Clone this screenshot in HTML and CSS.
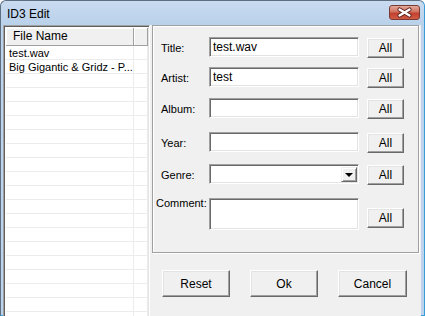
FILE: index.html
```html
<!DOCTYPE html>
<html>
<head>
  <title>ID3 Edit</title>
  <link rel="stylesheet" href="styles.css">
</head>
<body>
  <div class="window">
    <div class="titlebar">
      <span class="title">ID3 Edit</span>
      <div class="close-btn">
        <svg width="31" height="15" viewBox="0 0 31 15">
          <path d="M10.5 4.5 L20.5 10.5 M20.5 4.5 L10.5 10.5" stroke="#5a1d18" stroke-width="4.2" stroke-linecap="round"/>
          <path d="M10.5 4.5 L20.5 10.5 M20.5 4.5 L10.5 10.5" stroke="#fff" stroke-width="2.4" stroke-linecap="round"/>
        </svg>
      </div>
    </div>

    <div class="client">
      <div class="file-list">
        <div class="list-header">
          <div class="col-name">File Name</div>
          <div class="col-rest"></div>
        </div>
        <div class="list-body">
          <div class="list-row"><div class="cell-name">test.wav</div><div class="cell-rest"></div></div>
          <div class="list-row"><div class="cell-name">Big Gigantic &amp; Gridz - P...</div><div class="cell-rest"></div></div>
          <div class="list-row"><div class="cell-name"></div><div class="cell-rest"></div></div>
          <div class="list-row"><div class="cell-name"></div><div class="cell-rest"></div></div>
          <div class="list-row"><div class="cell-name"></div><div class="cell-rest"></div></div>
          <div class="list-row"><div class="cell-name"></div><div class="cell-rest"></div></div>
          <div class="list-row"><div class="cell-name"></div><div class="cell-rest"></div></div>
          <div class="list-row"><div class="cell-name"></div><div class="cell-rest"></div></div>
          <div class="list-row"><div class="cell-name"></div><div class="cell-rest"></div></div>
          <div class="list-row"><div class="cell-name"></div><div class="cell-rest"></div></div>
          <div class="list-row"><div class="cell-name"></div><div class="cell-rest"></div></div>
          <div class="list-row"><div class="cell-name"></div><div class="cell-rest"></div></div>
          <div class="list-row"><div class="cell-name"></div><div class="cell-rest"></div></div>
          <div class="list-row"><div class="cell-name"></div><div class="cell-rest"></div></div>
          <div class="list-row"><div class="cell-name"></div><div class="cell-rest"></div></div>
          <div class="list-row"><div class="cell-name"></div><div class="cell-rest"></div></div>
          <div class="list-row"><div class="cell-name"></div><div class="cell-rest"></div></div>
          <div class="list-row"><div class="cell-name"></div><div class="cell-rest"></div></div>
          <div class="list-row"><div class="cell-name"></div><div class="cell-rest"></div></div>
          <div class="list-row"><div class="cell-name"></div><div class="cell-rest"></div></div>
        </div>
      </div>

      <div class="editor">
        <div class="tag-group">
          <div class="field">
            <label>Title:</label>
            <div class="textbox">test.wav</div>
            <div class="btn btn-all">All</div>
          </div>
          <div class="field gap-sm">
            <label>Artist:</label>
            <div class="textbox">test</div>
            <div class="btn btn-all">All</div>
          </div>
          <div class="field">
            <label>Album:</label>
            <div class="textbox"></div>
            <div class="btn btn-all">All</div>
          </div>
          <div class="field gap-lg">
            <label>Year:</label>
            <div class="textbox"></div>
            <div class="btn btn-all">All</div>
          </div>
          <div class="field gap-md">
            <label>Genre:</label>
            <div class="textbox combo">
              <div class="combo-btn"><span class="arrow"></span></div>
            </div>
            <div class="btn btn-all">All</div>
          </div>
          <div class="field field-comment gap-lg">
            <label>Comment:</label>
            <div class="textbox memo"></div>
            <div class="btn btn-all">All</div>
          </div>
        </div>

        <div class="actions">
          <div class="btn btn-big">Reset</div>
          <div class="btn btn-big">Ok</div>
          <div class="btn btn-big">Cancel</div>
        </div>
      </div>
    </div>
  </div>
</body>
</html>
```

FILE: styles.css
```css
body {
  margin: 0;
  font-family: "Liberation Sans", Arial, sans-serif;
  font-size: 11px;
  color: #000;
}

.window {
  width: 425px;
  height: 316px;
  box-sizing: border-box;
  display: flex;
  flex-direction: column;
  background: #bcd3ec;
  border: 1px solid #5e6f82;
  border-bottom-color: #2fa4dc;
  border-right-color: #3b9bd6;
  border-radius: 6px 6px 0 0;
  padding: 0 3px 2px 2px;
}

/* title bar */
.titlebar {
  height: 24px;
  display: flex;
  background: linear-gradient(#c9dbef, #b9d1ea);
  margin: 0 -3px 0 -2px;
  padding: 0 3px 0 2px;
  border-radius: 6px 6px 0 0;
}
.title {
  font-size: 12px;
  line-height: 24px;
  padding-left: 4px;
  padding-top: 1px;
}
.close-btn {
  margin-left: auto;
  margin-top: 4px;
  margin-right: 1px;
  width: 31px;
  height: 15px;
  box-sizing: border-box;
  border: 1px solid #7a3a33;
  border-radius: 3px;
  background: linear-gradient(#e3a99b, #d0735f 45%, #c2402f 55%, #cf5b45);
  display: flex;
  align-items: center;
  justify-content: center;
}
.close-btn svg {
  display: block;
  margin: -1px;
}

.client {
  flex: 1;
  display: flex;
  background: #f0f0f0;
}

/* list view */
.file-list {
  width: 147px;
  box-sizing: border-box;
  border: 1px solid;
  border-color: #a0a0a0 #fff #fff #a0a0a0;
  padding: 1px;
  box-shadow: inset 1px 1px #5f5f5f, inset -1px -1px #e3e3e3;
  background: #fff;
  display: flex;
  flex-direction: column;
  overflow: hidden;
}
.list-header {
  height: 18px;
  flex-shrink: 0;
  display: flex;
  margin: 1px 0 0 1px;
}
.col-name, .col-rest {
  box-sizing: border-box;
  background: #f0f0f0;
  border-right: 1px solid #a0a0a0;
  border-bottom: 1px solid #a0a0a0;
  box-shadow: inset 1px 1px #fff;
  line-height: 17px;
}
.col-name {
  width: 128px;
  padding-left: 7px;
  font-size: 12px;
}
.col-rest {
  flex: 1;
}
.list-body {
  flex: 1;
  overflow: hidden;
  margin-left: 1px;
}
.list-row {
  height: 14px;
  box-sizing: border-box;
  display: flex;
  border-bottom: 1px solid #ececec;
}
.cell-name {
  width: 128px;
  box-sizing: border-box;
  border-right: 1px solid #ececec;
  padding-left: 3px;
  line-height: 14px;
  font-size: 11px;
  white-space: nowrap;
  overflow: hidden;
}
.cell-rest {
  flex: 1;
  border-right: 1px solid #ececec;
}

/* right side */
.editor {
  flex: 1;
  display: flex;
  flex-direction: column;
  margin: 0 2px 0 2px;
}
.tag-group {
  height: 228px;
  box-sizing: border-box;
  border: 1px solid #a0a0a0;
  box-shadow: inset 1px 1px #fff, 1px 1px #fff;
  padding: 11px 0 0 8px;
}
.field {
  display: grid;
  grid-template-columns: 40px 150px 37px;
  column-gap: 8px;
  height: 20px;
  margin-top: 11px;
}
.field:first-child {
  margin-top: 0;
}
.field.gap-sm { margin-top: 10px; }
.field.gap-md { margin-top: 12px; }
.field.gap-lg { margin-top: 14px; }

.field label {
  align-self: center;
  white-space: nowrap;
}
.field-comment {
  height: 32px;
}
.field-comment label {
  align-self: start;
  margin-left: -5px;
  margin-top: -1px;
}
.field-comment .btn-all {
  align-self: end;
  margin-bottom: 2px;
}

.textbox {
  box-sizing: border-box;
  height: 20px;
  background: #fff;
  border: 1px solid;
  border-color: #a0a0a0 #fff #fff #a0a0a0;
  box-shadow: inset 1px 1px #696969, inset -1px -1px #e3e3e3;
  padding: 0 3px;
  line-height: 18px;
  font-size: 12px;
}
.memo {
  height: 32px;
}
.combo {
  position: relative;
  padding: 2px 1px 1px 2px;
  display: flex;
  justify-content: flex-end;
}
.combo-btn {
  width: 16px;
  box-sizing: border-box;
  background: #f0f0f0;
  border: 1px solid;
  border-color: #f0f0f0 #696969 #696969 #f0f0f0;
  box-shadow: inset 1px 1px #fff, inset -1px -1px #a0a0a0;
  display: flex;
  align-items: center;
  justify-content: center;
}
.arrow {
  width: 0;
  height: 0;
  border-left: 4px solid transparent;
  border-right: 4px solid transparent;
  border-top: 4px solid #000;
  margin-top: 1px;
}

.btn {
  box-sizing: border-box;
  background: #f0f0f0;
  border: 1px solid;
  border-color: #fff #696969 #696969 #fff;
  box-shadow: inset -1px -1px #a0a0a0, inset 1px 1px #e3e3e3;
  display: flex;
  align-items: center;
  justify-content: center;
  font-size: 12px;
}
.btn-all {
  height: 20px;
  margin-top: 1px;
}

.actions {
  display: flex;
  gap: 20px;
  margin-top: 17px;
  padding-left: 10px;
}
.btn-big {
  width: 68px;
  height: 27px;
}
.btn-big:last-child {
  width: 69px;
}
```
